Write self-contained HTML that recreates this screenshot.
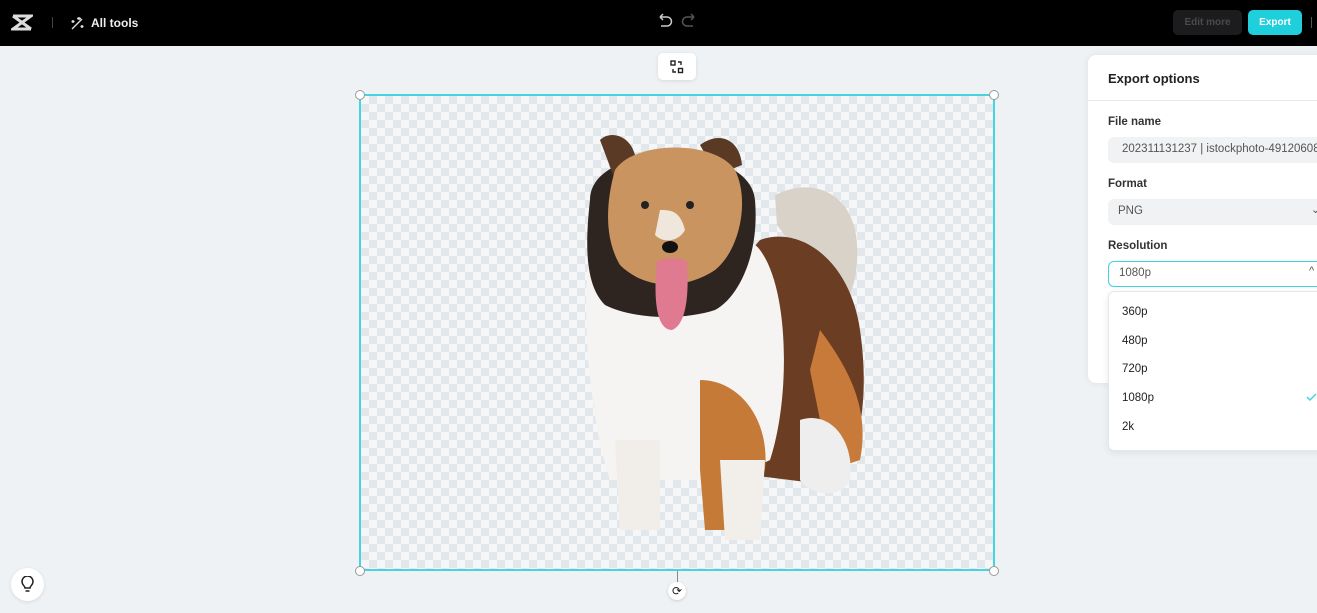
<!DOCTYPE html>
<html><head><meta charset="utf-8"><style>
*{box-sizing:border-box;margin:0;padding:0}
body{width:1317px;height:613px;overflow:hidden;background:#eff2f5;font-family:"Liberation Sans",sans-serif;position:relative}
.top{position:absolute;left:0;top:0;width:1317px;height:46px;background:#000}
.canvas{position:absolute;left:359px;top:94px;width:636px;height:477px;border:2px solid #45d4e0;
background-color:#f4f6f7;background-image:conic-gradient(#e1e7eb 25%,transparent 0 50%,#e1e7eb 0 75%,transparent 0);background-size:16px 16px}
.h{position:absolute;width:10px;height:10px;border-radius:50%;background:#fff;border:1px solid #999}
.panel{position:absolute;left:1088px;top:55px;width:240px;height:328px;background:#fff;border-radius:8px;box-shadow:0 0 8px rgba(0,0,0,.08)}
.lbl{position:absolute;left:20px;font-size:11.5px;font-weight:bold;color:#333}
.inp{position:absolute;left:20px;width:230px;height:26px;border-radius:6px;background:#f0f2f4;font-size:11.5px;color:#555;padding:6px 10px;white-space:nowrap;overflow:hidden}
.dd{position:absolute;left:1108px;top:291px;width:220px;height:160px;background:#fff;border-radius:6px;border:1px solid #e5e8eb;box-shadow:0 2px 8px rgba(0,0,0,.08)}
.dd div{position:absolute;left:13px;font-size:11.5px;color:#222}
</style></head><body>
<div class="top">
 <svg style="position:absolute;left:11px;top:14px" width="22" height="17" viewBox="0 0 22 17"><path d="M2 2h18L2 15h18M2 2l18 13" stroke="#ddd" stroke-width="3" fill="none"/></svg>
 <div style="position:absolute;left:52px;top:17px;width:1px;height:11px;background:#444"></div>
 <svg style="position:absolute;left:70px;top:16px" width="14" height="14" viewBox="0 0 14 14"><path d="M2 13L12 3M9 1v3M7 2.5h4M3 4v3M1.5 5.5h3M12 9v3M10.5 10.5h3" stroke="#ddd" stroke-width="1.4" fill="none"/></svg>
 <div style="position:absolute;left:91px;top:16px;color:#eee;font-size:12px;font-weight:bold">All tools</div>
 <svg style="position:absolute;left:657px;top:13px" width="40" height="16" viewBox="0 0 40 16"><path d="M3 4h7a4.5 4.5 0 010 9H4M3 4l3-3M3 4l3 3" stroke="#ccc" stroke-width="1.5" fill="none"/><path d="M37 4h-7a4.5 4.5 0 000 9h6M37 4l-3-3M37 4l-3 3" stroke="#555" stroke-width="1.5" fill="none"/></svg>
 <div style="position:absolute;left:1173px;top:10px;width:69px;height:25px;border-radius:5px;background:#1c1c1e;color:#4a4a4d;font-size:10px;font-weight:bold;text-align:center;line-height:25px">Edit more</div>
 <div style="position:absolute;left:1248px;top:10px;width:54px;height:25px;border-radius:5px;background:#1fcfdc;color:#fff;font-size:10px;font-weight:bold;text-align:center;line-height:25px">Export</div>
 <div style="position:absolute;left:1311px;top:17px;width:1px;height:11px;background:#555"></div>
</div>
<div style="position:absolute;left:658px;top:53px;width:38px;height:27px;background:#fff;border-radius:5px;box-shadow:0 1px 4px rgba(0,0,0,.1)">
 <svg style="position:absolute;left:12px;top:7px" width="14" height="14" viewBox="0 0 14 14"><rect x="1" y="1" width="4" height="4" stroke="#222" stroke-width="1.4" fill="none"/><rect x="8.5" y="8.5" width="4" height="4" stroke="#222" stroke-width="1.4" fill="none"/><path d="M8 2h3v3M6 12H3V9" stroke="#222" stroke-width="1.4" fill="none"/></svg>
</div>
<div class="canvas"></div>
<svg style="position:absolute;left:360px;top:95px" width="634" height="475" viewBox="360 95 634 475">
 <path d="M775 195c40-20 80 0 82 50 2 40-10 60-20 60l-60-80z" fill="#d9d2c8"/>
 <path d="M760 240c40-15 90 20 100 90 10 70 0 130-30 155l-80-10-20-200z" fill="#6b3d22"/>
 <path d="M820 330c30 40 50 80 40 130l-30 10-20-100z" fill="#c77a3a"/>
 <path d="M800 420c30-10 55 20 50 60-10 20-40 15-50 0z" fill="#eee"/>
 <path d="M590 250c20-30 150-30 170 0 30 40 30 150 10 210l-40 20-120 0c-20-60-30-170-20-230z" fill="#f6f4f2"/>
 <path d="M700 380c40 0 70 40 65 90l-30 60h-30l-5-60z" fill="#c57a38"/>
 <path d="M615 440h45v90h-40z" fill="#f1eeea"/>
 <path d="M720 460h45l-5 80h-35z" fill="#f2efea"/>
 <path d="M590 200c0-60 160-60 165 0 5 60-20 100-40 110-30 10-80 10-110-5-20-20-20-60-15-105z" fill="#2f2520"/>
 <path d="M600 140c10-10 30-5 35 15l-20 25zM700 145c20-15 40-5 42 20l-25 10z" fill="#5a3a25"/>
 <path d="M615 170c20-30 100-30 120 0 15 30 5 80-20 100-30 20-70 20-95-5-15-25-15-60-5-95z" fill="#c99460"/>
 <path d="M660 210c10 0 20 0 25 20-5 10-20 15-30 5z" fill="#efe6dc"/>
 <circle cx="645" cy="205" r="4" fill="#222"/><circle cx="690" cy="205" r="4" fill="#222"/>
 <ellipse cx="670" cy="247" rx="8" ry="6" fill="#111"/>
 <path d="M657 262c5-5 25-5 30 0 2 30 0 62-15 68-18 0-18-40-15-68z" fill="#e07a90"/>
</svg>
<div class="h" style="left:355px;top:90px"></div><div class="h" style="left:989px;top:90px"></div>
<div class="h" style="left:355px;top:566px"></div><div class="h" style="left:989px;top:566px"></div>
<div style="position:absolute;left:677px;top:571px;width:1px;height:11px;background:#888"></div>
<div style="position:absolute;left:668px;top:582px;width:18px;height:18px;border-radius:50%;background:#fff;box-shadow:0 1px 3px rgba(0,0,0,.15);text-align:center;font-size:12px;line-height:18px;color:#222">⟳</div>
<div style="position:absolute;left:11px;top:568px;width:33px;height:33px;border-radius:50%;background:#fff;box-shadow:0 1px 4px rgba(0,0,0,.1)">
 <svg style="position:absolute;left:10px;top:8px" width="13" height="17" viewBox="0 0 13 17"><path d="M4 12c0-2-3-3-3-6.5a5.5 5.5 0 0111 0C12 9 9 10 9 12zM4.5 15h4" stroke="#222" stroke-width="1.5" fill="none"/></svg>
</div>
<div class="panel">
 <div style="position:absolute;left:20px;top:16px;font-size:13px;font-weight:bold;color:#222">Export options</div>
 <div style="position:absolute;left:0;top:45px;width:240px;height:1px;background:#e6e9ec"></div>
 <div class="lbl" style="top:61px">File name</div>
 <div class="inp" style="top:82px;padding-left:14px">202311131237 | istockphoto-49120608</div>
 <div class="lbl" style="top:123px">Format</div>
 <div class="inp" style="top:144px">PNG<span style="position:absolute;left:203px;top:4px;font-size:11px">⌄</span></div>
 <div class="lbl" style="top:185px">Resolution</div>
 <div class="inp" style="top:206px;background:#fff;border:1.5px solid #3dd3e0;padding-top:5px">1080p<span style="position:absolute;left:200px;top:3px;font-size:11px">^</span></div>
</div>
<div class="dd">
 <div style="top:14px">360p</div><div style="top:43px">480p</div><div style="top:71px">720p</div>
 <div style="top:100px">1080p</div><div style="top:129px">2k</div>
 <svg style="position:absolute;left:197px;top:101px" width="11" height="9" viewBox="0 0 11 9"><path d="M1 4l3 3 6-6" stroke="#3dd3e0" stroke-width="1.4" fill="none"/></svg>
</div>
</body></html>
